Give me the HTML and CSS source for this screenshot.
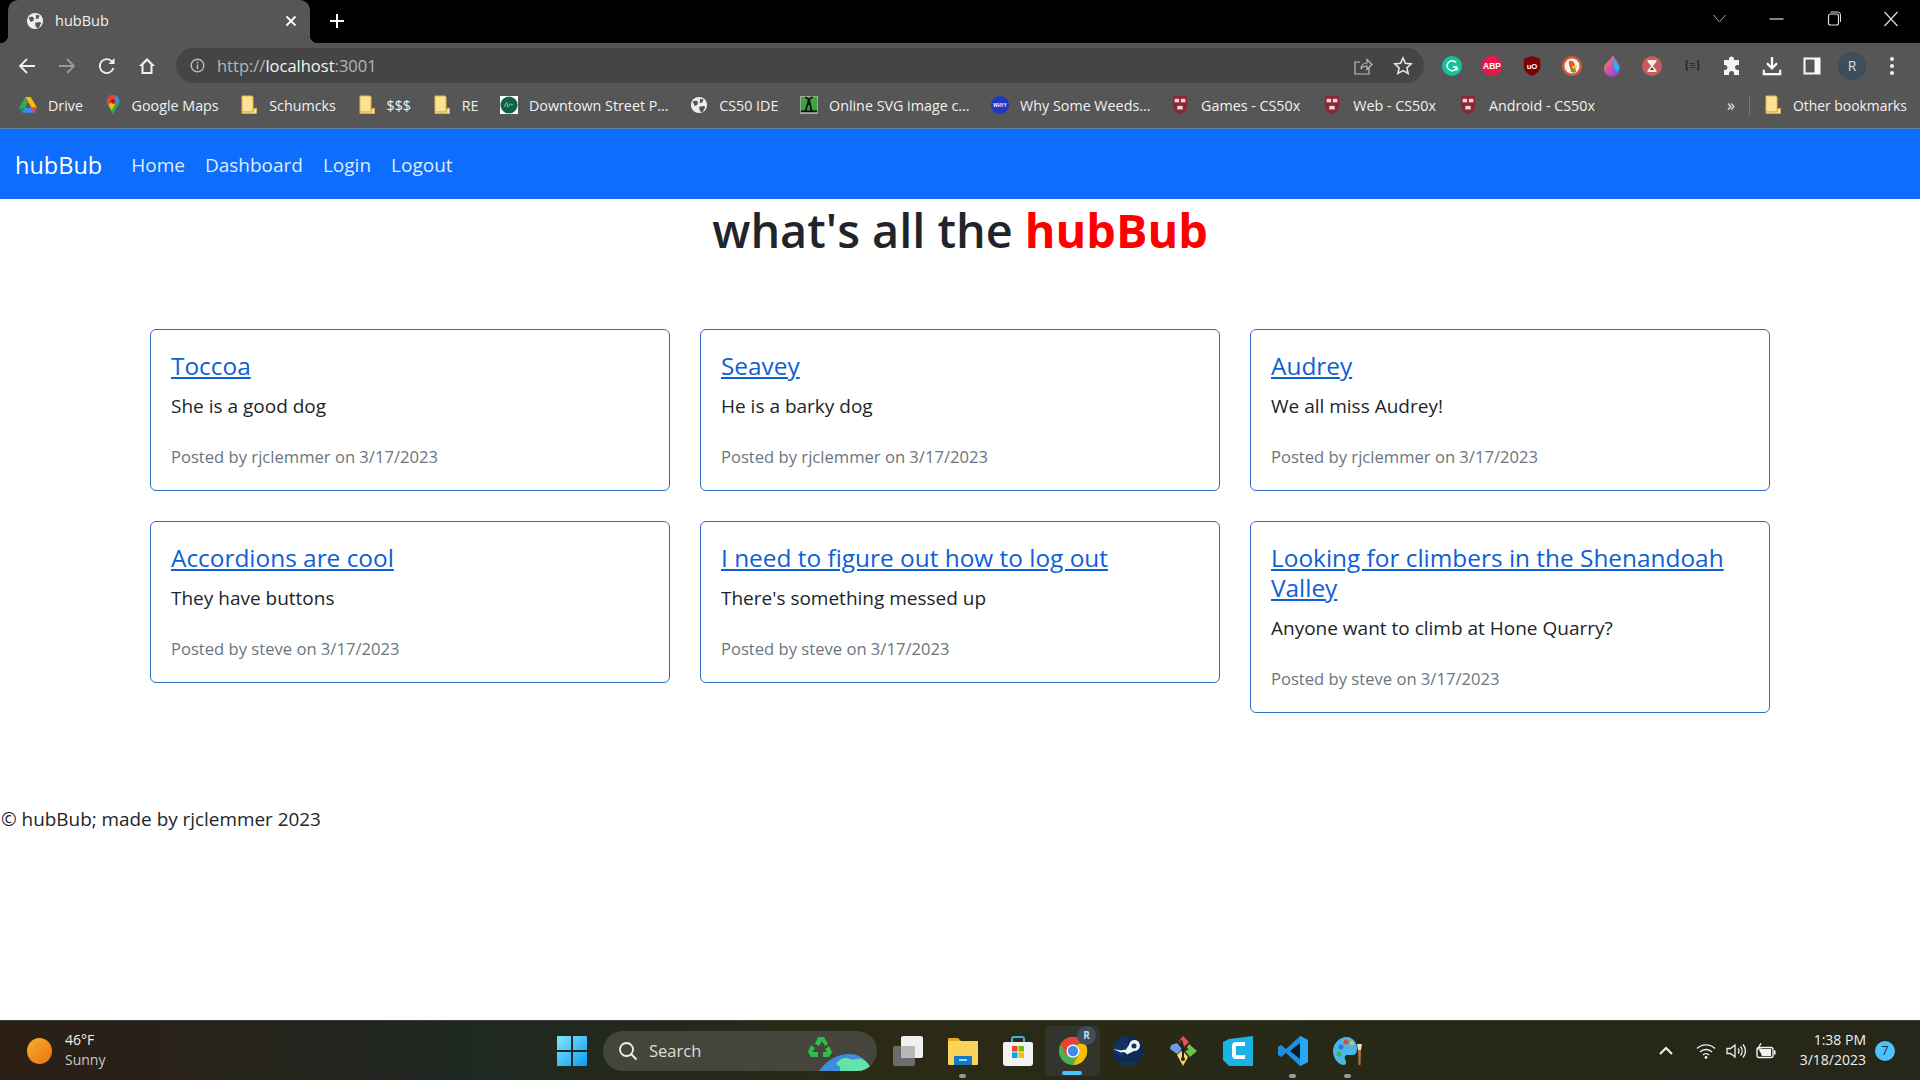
FILE: index.html
```html
<!DOCTYPE html>
<html lang="en">
<head>
<meta charset="utf-8">
<title>hubBub</title>
<link rel="stylesheet" href="styles.css">
</head>
<body>
<svg class="defs" aria-hidden="true">
  <defs>
    <symbol id="folder" viewBox="0 0 18 20"><path d="M2 1h10v0l1 1v15H2z" fill="#fde293" stroke="#e0b84f" stroke-width="1"/><path d="M2 18.500h14.500V13l-3 1v3H2z" fill="#fde293" stroke="#d9ae45"/></symbol>
    <symbol id="globe" viewBox="0 0 20 20"><circle cx="10" cy="10" r="9" fill="#eee"/><path d="M3 6l4-1 2 2-1 3-3 1zM11 3l4 1-1 3-3 1zM10 12l5-1 2 1-3 6-3-1z" fill="#565656"/></symbol>
    <symbol id="harvard" viewBox="0 0 18 22"><path d="M1 1h16v12c0 4-4 7-8 8-4-1-8-4-8-8z" fill="#8f2436"/><rect x="3" y="4" width="5" height="4" fill="#ddd"/><rect x="10" y="4" width="5" height="4" fill="#ddd"/><rect x="6" y="12" width="6" height="4" fill="#ddd"/></symbol>
  </defs>
</svg>

<header class="chrome">
  <div class="tabstrip">
    <div class="tab">
      <svg class="tab-icon" viewBox="0 0 20 20"><use href="#globe"/></svg>
      <span class="tab-title">hubBub</span>
      <svg class="tab-close" viewBox="0 0 12 12"><path d="M1.500 1.500l9 9M10.500 1.500l-9 9" stroke="#fff" stroke-width="1.800"/></svg>
    </div>
    <svg class="new-tab" viewBox="0 0 16 16"><path d="M8 1v14M1 8h14" stroke="#fff" stroke-width="2"/></svg>
    <div class="win-controls">
      <svg class="win-btn" viewBox="0 0 56 20"><path d="M22 6l6 7 6-7" fill="none" stroke="#aaa"/></svg>
      <svg class="win-btn" viewBox="0 0 56 20"><path d="M21 10h14" stroke="#ddd" stroke-width="1.200"/></svg>
      <svg class="win-btn" viewBox="0 0 56 20"><rect x="23" y="5" width="10" height="11" rx="2" fill="none" stroke="#ddd" stroke-width="1.200"/><path d="M25 3h7a3 3 0 0 1 3 3v7" fill="none" stroke="#ddd"/></svg>
      <svg class="win-btn" viewBox="0 0 56 20"><path d="M22 3l13 14M35 3L22 17" stroke="#ddd" stroke-width="1.200"/></svg>
    </div>
  </div>

  <div class="toolbar">
    <div class="tool-group">
      <span class="tool"><svg viewBox="0 0 20 20"><path d="M18 10H3M10 3l-7 7 7 7" fill="none" stroke="#f1f1f1" stroke-width="1.800"/></svg></span>
      <span class="tool"><svg viewBox="0 0 20 20"><path d="M2 10h15M10 3l7 7-7 7" fill="none" stroke="#9a9a9a" stroke-width="1.800"/></svg></span>
      <span class="tool"><svg viewBox="0 0 20 20"><path d="M16.500 12a7 7 0 1 1-1-6" fill="none" stroke="#f1f1f1" stroke-width="1.800"/><path d="M17.500 2v6h-6z" fill="#f1f1f1"/></svg></span>
      <span class="tool"><svg viewBox="0 0 20 20"><path d="M10 2L2 10h2.500v8h11v-8H18zM6.500 16V8.500L10 5l3.500 3.500V16z" fill="#f1f1f1"/></svg></span>
    </div>
    <div class="omnibox">
      <svg class="info-icon" viewBox="0 0 16 16"><circle cx="8" cy="8" r="6.700" fill="none" stroke="#bbb" stroke-width="1.500"/><path d="M8 7v5M8 4v1.800" stroke="#bbb" stroke-width="1.600"/></svg>
      <span class="url"><span class="url-dim">http://</span>localhost<span class="url-dim">:3001</span></span>
      <svg class="omni-share" viewBox="0 0 20 20"><path d="M16 12v6H2V6h5M8 13c0-4 3-6 6-6V3.500l5 5-5 5V10c-3 0-5 1-6 3z" fill="none" stroke="#bdbdbd" stroke-width="1.200"/></svg>
      <svg class="omni-star" viewBox="0 0 20 20"><path d="M10 2l2.400 5.300 5.800.6-4.300 3.900 1.200 5.700L10 14.600l-5.100 2.900 1.200-5.700L1.800 7.900l5.800-.6z" fill="none" stroke="#e5e5e5" stroke-width="1.600"/></svg>
    </div>
    <div class="tool-group">
      <span class="tool"><svg viewBox="0 0 20 20"><circle cx="10" cy="10" r="10" fill="#15c39a"/><path d="M14 6.500A5 5 0 1 0 15 11v3.500M15 11h-4" fill="none" stroke="#fff" stroke-width="1.500"/></svg></span>
      <span class="tool"><svg viewBox="0 0 20 20"><path d="M6 0h8l6 6v8l-6 6H6l-6-6V6z" fill="#e8184a"/><text x="10" y="13.200" class="ext-text">ABP</text></svg></span>
      <span class="tool"><svg viewBox="0 0 20 22"><path d="M10 0l9 3v9c0 5-5 8-9 10-4-2-9-5-9-10V3z" fill="#800000"/><text x="10" y="14.500" class="ext-text">uO</text></svg></span>
      <span class="tool"><svg viewBox="0 0 20 20"><circle cx="10" cy="10" r="10" fill="#de5833"/><circle cx="10" cy="10" r="7.500" fill="#f7f7f7"/><path d="M7 5c3-1 6 1 6 5l1 6H9C9 12 6 9 7 5z" fill="#de5833"/><path d="M10 10l5-1v2l-4 2z" fill="#fdd20a"/><path d="M10 14l3 .5-1 2.500-2-.5z" fill="#4cba3c"/></svg></span>
      <span class="tool"><svg viewBox="0 0 20 24" class="ext-tall"><defs><linearGradient id="drop" x1="0" y1="0" x2="1" y2="1"><stop offset="0" stop-color="#e8a838"/><stop offset=".5" stop-color="#d04fb0"/><stop offset="1" stop-color="#5a4fe0"/></linearGradient></defs><path d="M11 0c3 5 8 9 8 15a9 9 0 0 1-18 0C1 9 8 6 11 0z" fill="url(#drop)"/><path d="M12 3c2 4 6 7 6 11 0 2-1 4-3 4-3-3-4-10-3-15z" fill="#22b5e8"/></svg></span>
      <span class="tool"><svg viewBox="0 0 20 20"><circle cx="10" cy="10" r="10" fill="#c95b5b"/><path d="M5.500 4h9v1.500L11 10l3.500 4.500V16h-9v-1.500L9 10 5.500 5.500z" fill="#f5f0e6"/><path d="M8 14l2-3 2 3z" fill="#444"/></svg></span>
      <span class="tool"><svg viewBox="0 0 22 14" class="ext-brace"><path d="M5 1C3 1 3.500 3 3.500 5 3.500 6 2.500 7 1.500 7c1 0 2 1 2 2 0 2-.5 4 1.500 4M17 1c2 0 1.500 2 1.500 4 0 1 1 2 2 2-1 0-2 1-2 2 0 2 .5 4-1.500 4" fill="none" stroke="#222" stroke-width="1.800"/><path d="M7.500 4.500h7M7.500 7h7M7.500 9.500h7" fill="none" stroke="#333" stroke-width="1.300"/></svg></span>
      <span class="tool"><svg viewBox="0 0 20 20"><path d="M7 3a2.500 2.500 0 0 1 5 0v1h5v5h-1.500a2.500 2.500 0 0 0 0 5H17v5h-5v-1.500a2.500 2.500 0 0 0-5 0V19H2v-5h1a2.500 2.500 0 0 0 0-5H2V4h5z" fill="#f4f4f4"/></svg></span>
      <span class="tool"><svg viewBox="0 0 22 22" class="ext-wide"><path d="M11 1v12M5.500 8l5.500 5.500L16.500 8" fill="none" stroke="#fafafa" stroke-width="2.600"/><path d="M2 15v5h18v-5" fill="none" stroke="#fafafa" stroke-width="2.400"/></svg></span>
      <span class="tool"><svg viewBox="0 0 20 20"><path d="M1.500 1.500h17v17h-17z" fill="#fafafa"/><path d="M3.500 3.500h9v13h-9z" fill="#565656"/></svg></span>
      <span class="tool"><span class="avatar">R</span></span>
      <span class="tool"><svg viewBox="0 0 6 20" class="kebab"><circle cx="3" cy="3" r="2" fill="#f1f1f1"/><circle cx="3" cy="10" r="2" fill="#f1f1f1"/><circle cx="3" cy="17" r="2" fill="#f1f1f1"/></svg></span>
    </div>
  </div>

  <nav class="bookmarks">
    <a class="bm"><svg class="bm-icon" viewBox="0 0 20 18"><path d="M7 0h6l7 12h-6z" fill="#fbbc04"/><path d="M7 0l3 6-6 11-4-5z" fill="#34a853"/><path d="M6.500 12H20l-3 5.500H3.500z" fill="#4285f4"/><path d="M3.500 17.500L0 12h6.500z" fill="#0f9d58"/><path d="M17 17.500L20 12h-6z" fill="#ea4335"/></svg>Drive</a>
    <a class="bm"><svg class="bm-icon bm-narrow" viewBox="0 0 14 22"><path d="M7 0a7 7 0 0 1 7 7c0 5-5 8-7 15C5 15 0 12 0 7a7 7 0 0 1 7-7z" fill="#34a853"/><path d="M2 2.500A7 7 0 0 1 11 1L2.500 11A7 7 0 0 1 2 2.500z" fill="#ea4335"/><path d="M11 1a7 7 0 0 1 3 6l-9 5-1-2z" fill="#4285f4"/><path d="M2.500 11L5 8l4 2-3.500 7z" fill="#fbbc04"/><circle cx="7" cy="7" r="2.500" fill="#b21a1a"/></svg>Google Maps</a>
    <a class="bm"><svg class="bm-icon" viewBox="0 0 18 20"><use href="#folder"/></svg>Schumcks</a>
    <a class="bm"><svg class="bm-icon" viewBox="0 0 18 20"><use href="#folder"/></svg>$$$</a>
    <a class="bm"><svg class="bm-icon" viewBox="0 0 18 20"><use href="#folder"/></svg>RE</a>
    <a class="bm"><svg class="bm-icon" viewBox="0 0 20 20"><rect width="20" height="20" fill="#fff"/><circle cx="10" cy="10" r="9.500" fill="#11614a"/><path d="M5 12c2-6 3-6 3-2s2 1 3-1 1 3 4 0" fill="none" stroke="#cde3d6" stroke-width=".8"/></svg>Downtown Street P...</a>
    <a class="bm"><svg class="bm-icon" viewBox="0 0 20 20"><use href="#globe"/></svg>CS50 IDE</a>
    <a class="bm"><svg class="bm-icon" viewBox="0 0 20 20"><rect width="20" height="20" fill="#aaa"/><rect x="1" y="1" width="18" height="16" fill="#3ba53b"/><path d="M10 4L6 1.500M10 4l4-3M10 4l-4 13M10 4l3 13M9 9h3" stroke="#111" stroke-width="2"/><path d="M1 17h18" stroke="#111" stroke-width="2"/></svg>Online SVG image c...</a>
    <a class="bm"><svg class="bm-icon" viewBox="0 0 20 20"><circle cx="10" cy="10" r="10" fill="#2236c8"/><text x="10" y="11.800" class="whyy-text">WHYY</text></svg>Why Some Weeds...</a>
    <a class="bm bm-shield"><svg class="bm-icon bm-narrow" viewBox="0 0 18 22"><use href="#harvard"/></svg>Games - CS50x</a>
    <a class="bm bm-shield"><svg class="bm-icon bm-narrow" viewBox="0 0 18 22"><use href="#harvard"/></svg>Web - CS50x</a>
    <a class="bm bm-shield"><svg class="bm-icon bm-narrow" viewBox="0 0 18 22"><use href="#harvard"/></svg>Android - CS50x</a>
    <span class="bm-more">»</span>
    <span class="bm-sep"></span>
    <a class="bm bm-other"><svg class="bm-icon" viewBox="0 0 18 20"><use href="#folder"/></svg>Other bookmarks</a>
  </nav>
</header>

<div class="site-nav">
  <a class="brand">hubBub</a>
  <a class="nav-link">Home</a>
  <a class="nav-link">Dashboard</a>
  <a class="nav-link">Login</a>
  <a class="nav-link">Logout</a>
</div>

<main class="page">
  <h1 class="headline">what's all the <span class="headline-red">hubBub</span></h1>
  <section class="cards">
    <article class="card"><h5 class="card-title"><a>Toccoa</a></h5><p class="card-text">She is a good dog</p><p class="card-meta">Posted by rjclemmer on 3/17/2023</p></article>
    <article class="card"><h5 class="card-title"><a>Seavey</a></h5><p class="card-text">He is a barky dog</p><p class="card-meta">Posted by rjclemmer on 3/17/2023</p></article>
    <article class="card"><h5 class="card-title"><a>Audrey</a></h5><p class="card-text">We all miss Audrey!</p><p class="card-meta">Posted by rjclemmer on 3/17/2023</p></article>
    <article class="card"><h5 class="card-title"><a>Accordions are cool</a></h5><p class="card-text">They have buttons</p><p class="card-meta">Posted by steve on 3/17/2023</p></article>
    <article class="card"><h5 class="card-title"><a>I need to figure out how to log out</a></h5><p class="card-text">There's something messed up</p><p class="card-meta">Posted by steve on 3/17/2023</p></article>
    <article class="card"><h5 class="card-title"><a>Looking for climbers in the Shenandoah Valley</a></h5><p class="card-text">Anyone want to climb at Hone Quarry?</p><p class="card-meta">Posted by steve on 3/17/2023</p></article>
  </section>
  <footer class="site-footer">© hubBub; made by rjclemmer 2023</footer>
</main>

<div class="taskbar">
  <div class="weather">
    <span class="sun"></span>
    <div class="weather-text"><span class="temp">46°F</span><span class="cond">Sunny</span></div>
  </div>
  <span class="task-slot"><svg class="task-win" viewBox="0 0 30 30"><defs><linearGradient id="win" x1="0" y1="0" x2="1" y2="1"><stop offset="0" stop-color="#7fe6fb"/><stop offset="1" stop-color="#0f9cf3"/></linearGradient></defs><path d="M0 1a1 1 0 0 1 1-1h13v14H0zM16 0h13a1 1 0 0 1 1 1v13H16zM0 16h14v14H1a1 1 0 0 1-1-1zM16 16h14v13a1 1 0 0 1-1 1H16z" fill="url(#win)"/></svg></span>
  <div class="search-pill">
    <svg class="search-icon" viewBox="0 0 20 20"><circle cx="8.500" cy="8.500" r="6.500" fill="none" stroke="#eee" stroke-width="1.800"/><path d="M13 13l5.500 5.500" stroke="#eee" stroke-width="2"/></svg>
    <span class="search-text">Search</span>
    <svg class="search-art" viewBox="0 0 66 40"><path d="M10 6h6l4 7-3 2-3-5-3 5-4-2zM3 14l4 3-3 4h6v5H3l-3-5zM21 15l3 6-3 5h-6v-5h4l-2-3z" fill="#2fbe4c"/><path d="M11 40c8-11 18-17 31-17 10 0 18 7 22 17z" fill="#3f8be0"/><path d="M28 33c4-6 10-7 14-5 3 2 8-2 12 0 4 2 8 6 10 12H32c1-4-1-5-4-7z" fill="#63e3a6"/></svg>
  </div>
  <span class="task-slot"><svg class="task-icon" viewBox="0 0 30 30"><rect x="0" y="10" width="22" height="20" rx="2" fill="#6c6c6c"/><rect x="8" y="0" width="22" height="22" rx="2" fill="#f0f0f0"/><rect x="8" y="10" width="14" height="12" fill="#b8b8b8"/></svg></span>
  <span class="task-slot"><svg class="task-icon" viewBox="0 0 30 30"><path d="M0 3a1 1 0 0 1 1-1h9l3 3h-13z" fill="#e8a91c"/><path d="M0 5h30v23a1 1 0 0 1-1 1H1a1 1 0 0 1-1-1z" fill="#fbd35b"/><path d="M7 20h16a1 1 0 0 1 1 1v8H6v-8a1 1 0 0 1 1-1z" fill="#1278c8"/><path d="M11 24h8" stroke="#9fd8ff" stroke-width="2"/></svg><i class="dot"></i></span>
  <span class="task-slot"><svg class="task-icon" viewBox="0 0 30 30"><path d="M9 7V3a2 2 0 0 1 2-2h8a2 2 0 0 1 2 2v4" fill="none" stroke="#39b5e8" stroke-width="2"/><path d="M0 8a2 2 0 0 1 2-2h26a2 2 0 0 1 2 2v19a3 3 0 0 1-3 3H3a3 3 0 0 1-3-3z" fill="#f2f2f2"/><rect x="9" y="10" width="5.500" height="5.500" fill="#ea4a2a"/><rect x="15.500" y="10" width="5.500" height="5.500" fill="#7fba00"/><rect x="9" y="16.500" width="5.500" height="5.500" fill="#00a4ef"/><rect x="15.500" y="16.500" width="5.500" height="5.500" fill="#ffb900"/></svg></span>
  <span class="task-slot task-active"><svg class="task-icon" viewBox="0 0 32 32"><circle cx="16" cy="16" r="15" fill="#4caf50"/><path d="M3 8.500A15 15 0 0 1 29 8.500L16 8.500l-7 12z" fill="#ea4335"/><path d="M29 8.500A15 15 0 0 1 16 31l7-12.500-2-10z" fill="#fbbc04"/><circle cx="16" cy="16" r="7" fill="#fff"/><circle cx="16" cy="16" r="5.500" fill="#4285f4"/></svg><span class="chrome-badge">R</span><i class="active-bar"></i></span>
  <span class="task-slot"><svg class="task-icon" viewBox="0 0 30 30"><circle cx="15" cy="15" r="15" fill="#12335f"/><path d="M15 0a15 15 0 0 1 15 15 15 15 0 0 1-5 11H5l-5-9 9 4 6-7z" fill="#0e2a52"/><path d="M0 13l8 3.500a4.500 4.500 0 0 1 6 2l7-3.500a5.500 5.500 0 1 0-5-6l-3.500 5a5 5 0 0 0-4 .5z" fill="#eef3f8"/><circle cx="21" cy="10" r="2.500" fill="#12335f"/></svg></span>
  <span class="task-slot"><svg class="task-icon" viewBox="0 0 30 30"><path d="M15 0l6 6-5 5-5-6z" fill="#e8505b"/><path d="M3 9l6-2 5 6-5 5-7-5z" fill="#6e9be8"/><path d="M21 8l8 7-7 6-5-6z" fill="#6fbf4b"/><path d="M9 19l5-5 6 7-5 9z" fill="#f4d96b"/><path d="M13 4l3 10M16 14l4-1M15 14v9" stroke="#222" stroke-width="2"/><circle cx="15" cy="14" r="2" fill="#222"/><circle cx="15" cy="23" r="2" fill="#222"/></svg></span>
  <span class="task-slot"><svg class="task-icon" viewBox="0 0 30 30"><path d="M6 3l24-3v30H6l-6-6V6z" fill="#19b3e6"/><path d="M22 8h-9a2 2 0 0 0-2 2v9a2 2 0 0 0 2 2h9" fill="none" stroke="#fff" stroke-width="4"/></svg></span>
  <span class="task-slot"><svg class="task-icon" viewBox="0 0 30 30"><path d="M22 0l8 4v22l-8 4L8 17l-5 4-3-2v-8l3-2 5 4z" fill="#1c8fdd"/><path d="M22 7v16l-10-8z" fill="#0c1b2b"/><path d="M22 0l8 4v22l-8 4z" fill="#28a6f0"/></svg><i class="dot"></i></span>
  <span class="task-slot"><svg class="task-icon" viewBox="0 0 30 30"><path d="M14 1C6 1 0 8 0 15c0 8 6 14 11 14 3 0 2-4 1-6s0-4 3-4h5c3 0 4-3 4-7 0-6-5-11-10-11z" fill="#4db6e8"/><circle cx="8" cy="11" r="2.500" fill="#3a6fd8"/><circle cx="13" cy="6" r="2.500" fill="#e04a3a"/><circle cx="6" cy="18" r="2.500" fill="#47b04a"/><circle cx="19" cy="7" r="2" fill="#f2c230"/><path d="M24 8h5l-1 6h-3z" fill="#e8e0c8"/><path d="M25 14h3l-.5 15h-2z" fill="#a8763e"/></svg><i class="dot"></i></span>
  <div class="tray">
    <svg class="tray-chev" viewBox="0 0 14 9"><path d="M1 8l6-6 6 6" fill="none" stroke="#f1f1f1" stroke-width="2"/></svg>
    <svg class="tray-wifi" viewBox="0 0 20 16"><path d="M1 5.500a13 13 0 0 1 18 0M4 9a8.500 8.500 0 0 1 12 0M7 12a4 4 0 0 1 6 0" fill="none" stroke="#f1f1f1" stroke-width="1.400"/><circle cx="10" cy="14.500" r="1.400" fill="#f1f1f1"/></svg>
    <svg class="tray-vol" viewBox="0 0 20 16"><path d="M1 5.500h3.500L9 2v12L4.500 10.500H1z" fill="none" stroke="#f1f1f1" stroke-width="1.300"/><path d="M12 5.500a4 4 0 0 1 0 5M14.500 3.500a7 7 0 0 1 0 9M17 1.500a10 10 0 0 1 0 13" fill="none" stroke="#f1f1f1" stroke-width="1.300"/></svg>
    <svg class="tray-bat" viewBox="0 0 20 16"><rect x="1" y="4.500" width="16" height="10" rx="2" fill="none" stroke="#f1f1f1" stroke-width="1.400"/><path d="M3 6h12v7H6z" fill="#f1f1f1"/><rect x="18" y="7.500" width="1.600" height="4" fill="#f1f1f1"/><path d="M5 0L2 6h3l-1 3" fill="none" stroke="#f1f1f1" stroke-width="1.200"/></svg>
    <div class="clock"><span>1:38 PM</span><span>3/18/2023</span></div>
    <span class="notif">7</span>
  </div>
</div>
</body>
</html>
```

FILE: styles.css
```css
* { box-sizing: border-box; }
html, body { height: 100%; }
body {
  margin: 0;
  height: 1080px;
  overflow: hidden;
  display: flex;
  flex-direction: column;
  font-family: "Open Sans", "Noto Sans", sans-serif;
  color: #212529;
  background: #fff;
}
.defs { display: block; width: 0; height: 0; }

/* browser chrome */
.chrome { background: #565656; color: #f1f1f1; flex: none; }
.tabstrip { height: 43px; background: #000; display: flex; align-items: center; padding-left: 8px; }
.tab {
  position: relative;
  width: 302px;
  height: 43px;
  background: #565656;
  border-radius: 10px 10px 0 0;
  display: flex;
  align-items: center;
  padding: 0 13px 0 18px;
}
.tab::before, .tab::after {
  content: "";
  position: absolute;
  bottom: 0;
  width: 8px;
  height: 8px;
}
.tab::before { left: -8px; background: radial-gradient(circle at 0 0, #000 8px, #565656 8.500px); }
.tab::after { right: -8px; background: radial-gradient(circle at 100% 0, #000 8px, #565656 8.500px); }
.tab-icon { width: 18px; height: 18px; margin-right: 11px; margin-top: -2px; }
.tab-title { font-size: 14.500px; flex: 1; margin-top: -2px; }
.tab-close { width: 12px; height: 12px; margin-top: -2px; }
.new-tab { width: 16px; height: 16px; margin-left: 19px; margin-top: -2px; }
.win-controls { margin-left: auto; display: flex; padding-right: 1px; margin-top: -6px; }
.win-btn { width: 57px; height: 20px; }

.toolbar { height: 40px; display: flex; padding: 0 8px 0 7px; align-items: flex-start; }
.tool-group { display: flex; height: 35px; margin-top: 5px; align-items: center; }
.tool { width: 40px; height: 35px; display: flex; align-items: center; justify-content: center; }
.tool svg { width: 20px; height: 20px; }
.tool svg.ext-wide { width: 22px; height: 20px; }
.tool svg.ext-tall { width: 18px; height: 22px; }
.tool svg.ext-brace { width: 17px; height: 11px; }
.tool svg.kebab { width: 6px; height: 20px; }
.omnibox {
  flex: 1;
  height: 35px;
  margin: 5px 8px 0 9px;
  background: #454545;
  border-radius: 18px;
  display: flex;
  align-items: center;
  padding: 0 11px 0 14px;
}
.info-icon { width: 15px; height: 15px; margin-right: 12px; }
.url { font-size: 16.500px; flex: 1; color: #f4f4f4; }
.url-dim { color: #b5b5b5; }
.omni-share { width: 20px; height: 20px; margin-right: 20px; }
.omni-star { width: 20px; height: 20px; }
.avatar {
  width: 28px; height: 28px;
  border-radius: 50%;
  background: #3b4e5c;
  color: #d5dde2;
  font-size: 14px;
  display: flex;
  align-items: center;
  justify-content: center;
}
.ext-text { font: 700 8.500px "Liberation Sans", sans-serif; fill: #fff; text-anchor: middle; }
.whyy-text { font: 700 5px "Liberation Sans", sans-serif; fill: #fff; text-anchor: middle; }

.bookmarks {
  height: 46px;
  display: flex;
  align-items: center;
  padding: 0 13px 1px 19px;
  border-bottom: 1px solid #5d7fa8;
  font-size: 14.300px;
}
.bm { display: flex; align-items: center; white-space: nowrap; color: #f1f1f1; margin-right: 21.600px; }
.bm-icon { width: 18px; height: 20px; margin-right: 11px; flex: none; }
.bm-narrow { width: 16px; }
.bm-shield .bm-icon { margin-right: 13px; }
.bm-shield { margin-right: 24px; }
.bm-more { margin-left: auto; font-size: 16px; width: 22px; }
.bm-sep { width: 1px; height: 20px; background: #777; margin-right: 14px; }
.bm-other { margin-right: 0; font-size: 13.900px; }

/* site navbar */
.site-nav {
  flex: none;
  height: 70px;
  background: #0d6efd;
  display: flex;
  align-items: center;
  padding: 1px 0 0 15px;
}
.brand { color: #fff; font-size: 23.500px; margin-right: 19px; }
.nav-link { color: rgba(255, 255, 255, .88); font-size: 19px; padding: 0 10px; }

/* content */
.page { flex: 1; min-height: 0; }
.headline {
  margin: 0;
  height: 65px;
  line-height: 63px;
  text-align: center;
  font-size: 46.800px;
  font-weight: 550;
  color: #212529;
}
.headline-red { color: #f00; font-weight: 700; }
.cards {
  display: grid;
  grid-template-columns: repeat(3, 520px);
  gap: 30px;
  justify-content: center;
  align-items: start;
  margin-top: 65px;
}
.card {
  border: 1px solid #2f6fc0;
  border-radius: 6px;
  padding: 21px 20px 20px;
  background: #fff;
}
.card-title { margin: 0 0 10px; font-size: 24.400px; line-height: 30px; font-weight: 500; }
.card-title a { color: #0d5fd8; text-decoration: underline; }
.card-text { margin: 0 0 22px; font-size: 19px; line-height: 30px; }
.card-meta { margin: 0; font-size: 16.600px; line-height: 27px; color: #6c757d; }
.site-footer { margin-top: 91px; padding-left: 1px; font-size: 18.900px; line-height: 30px; }

/* taskbar */
.taskbar {
  flex: none;
  height: 60px;
  display: flex;
  align-items: center;
  background: linear-gradient(90deg, #2c1e15 0, #1f2822 25%, #2a2a15 45%, #26261a 100%);
  border-top: 1px solid #3c3c36;
  color: #f1f1f1;
}
.weather { width: 544px; display: flex; align-items: center; padding-left: 27px; }
.sun { width: 25px; height: 26px; border-radius: 50%; background: linear-gradient(135deg, #f0b429, #ee6f0f); margin-right: 13px; }
.weather-text { display: flex; flex-direction: column; line-height: 20px; font-size: 14px; margin-top: -2px; }
.cond { color: #c8c8c8; }
.task-slot { position: relative; width: 55px; height: 58px; display: flex; align-items: center; justify-content: center; flex: none; }
.task-win { width: 30px; height: 30px; }
.task-icon { width: 30px; height: 30px; }
.search-pill {
  width: 274px;
  height: 40px;
  margin: 0 3px 0 4px;
  border-radius: 20px;
  background: #45453c;
  display: flex;
  align-items: center;
  padding-left: 15px;
  position: relative;
  overflow: hidden;
  flex: none;
}
.search-icon { width: 20px; height: 20px; margin-right: 11px; }
.search-text { font-size: 16.500px; color: #ddd; }
.search-art { position: absolute; right: 3px; bottom: 0; width: 66px; height: 40px; }
.dot { position: absolute; bottom: 2px; left: 24px; width: 7px; height: 4px; border-radius: 2px; background: #9a9a9a; }
.task-active { background: #33352c; border-radius: 5px; height: 50px; }
.active-bar { position: absolute; bottom: 1px; left: 17px; width: 20px; height: 4px; border-radius: 2px; background: #4cc2ff; }
.chrome-badge {
  position: absolute;
  top: 0;
  right: 4px;
  width: 19px; height: 19px;
  border-radius: 50%;
  background: #3d4f5c;
  color: #cfd8dd;
  font-size: 10px;
  font-weight: 700;
  display: flex;
  align-items: center;
  justify-content: center;
}
.tray { margin-left: auto; display: flex; align-items: center; padding-right: 25px; }
.tray-chev { width: 14px; height: 9px; margin-right: 23px; }
.tray-wifi, .tray-vol, .tray-bat { width: 20px; height: 16px; margin-right: 10px; }
.clock { display: flex; flex-direction: column; align-items: flex-end; font-size: 14px; line-height: 20px; margin: -2px 9px 0 14px; }
.notif {
  width: 20px; height: 20px;
  border-radius: 50%;
  background: #4cc2ff;
  color: #10303f;
  font-size: 12px;
  display: flex;
  align-items: center;
  justify-content: center;
}
```
